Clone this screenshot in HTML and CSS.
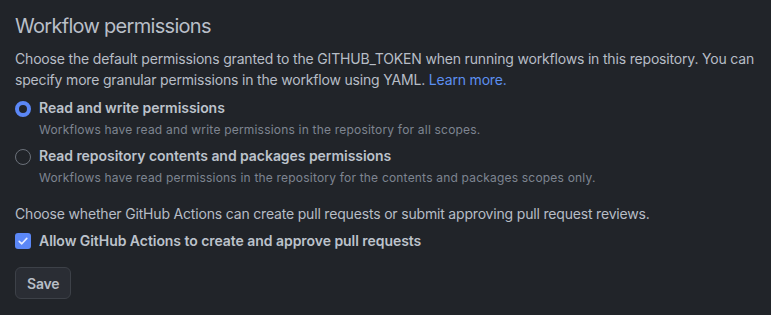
FILE: index.html
```html
<!DOCTYPE html>
<html lang="en">
<head>
	<meta charset="UTF-8">
	<title>Workflow permissions</title>
	<link rel="stylesheet" href="styles.css">
</head>
<body>
	<div class='panel'>
		<h2 class='title'>Workflow permissions</h2>
		<p class='note'>Choose the default permissions granted to the GITHUB_TOKEN when running workflows in this repository. You can specify more granular permissions in the workflow using YAML. <a href='#'>Learn more.</a></p>
		<div class='option'>
			<span class='radio on'></span>
			<div class='text'>
				<div class='label'>Read and write permissions</div>
				<div class='hint'>Workflows have read and write permissions in the repository for all scopes.</div>
			</div>
		</div>
		<div class='option'>
			<span class='radio'></span>
			<div class='text'>
				<div class='label'>Read repository contents and packages permissions</div>
				<div class='hint'>Workflows have read permissions in the repository for the contents and packages scopes only.</div>
			</div>
		</div>
		<p class='note second'>Choose whether GitHub Actions can create pull requests or submit approving pull request reviews.</p>
		<div class='check'>
			<span class='box'>
				<svg width="12" height="12" viewBox="0 0 12 12"><path d="M2.2 6.3 L4.8 8.8 L9.8 3.4" fill="none" stroke="#e6ecff" stroke-width="1.6" stroke-linecap="round" stroke-linejoin="round"/></svg>
			</span>
			<span class='label'>Allow GitHub Actions to create and approve pull requests</span>
		</div>
		<button class='save'>Save</button>
	</div>
</body>
</html>
```

FILE: styles.css
```css
*{
	padding: 0;
	margin: 0;
	box-sizing: border-box;
}
body{
	background: #212429;
	color: #b7bdc6;
	font-family: Inter, "Liberation Sans", sans-serif;
	font-size: 14px;
}
.panel{
	padding: 11px 15px 0 15px;
}
.title{
	font-size: 20px;
	font-weight: 400;
	line-height: 30px;
	letter-spacing: -0.7px;
	color: #b9bfc8;
	padding-bottom: 7px;
}
.note{
	line-height: 21px;
	letter-spacing: -0.18px;
	color: #b7bdc6;
}
.note a{
	color: #5c8ff0;
	text-decoration: none;
}
.option{
	display: flex;
	gap: 8px;
	margin-top: 8px;
}
.option + .option{
	margin-top: 7px;
}
.radio{
	flex: none;
	width: 16px;
	height: 16px;
	margin-top: 3px;
	border-radius: 50%;
	border: 1px solid #6b717a;
}
.radio.on{
	border: 4px solid #5b87f6;
	background: #212429;
}
.label{
	font-weight: 600;
	line-height: 20px;
	letter-spacing: -0.05px;
	color: #bcc2cb;
}
.hint{
	font-size: 12px;
	line-height: 18px;
	letter-spacing: 0.2px;
	color: #7e8591;
	margin-top: 3px;
}
.second{
	margin-top: 16px;
}
.check{
	display: flex;
	align-items: center;
	gap: 8px;
	margin-top: 7px;
}
.box{
	flex: none;
	width: 16px;
	height: 16px;
	border-radius: 3px;
	background: #5b87f6;
	display: flex;
	align-items: center;
	justify-content: center;
}
.save{
	margin-top: 16px;
	height: 32px;
	padding: 0 11px;
	background: #2a2d34;
	border: 1px solid #3d4148;
	border-radius: 6px;
	color: #b7bdc6;
	font-family: inherit;
	font-size: 14px;
	font-weight: 600;
	letter-spacing: -0.2px;
}
```
